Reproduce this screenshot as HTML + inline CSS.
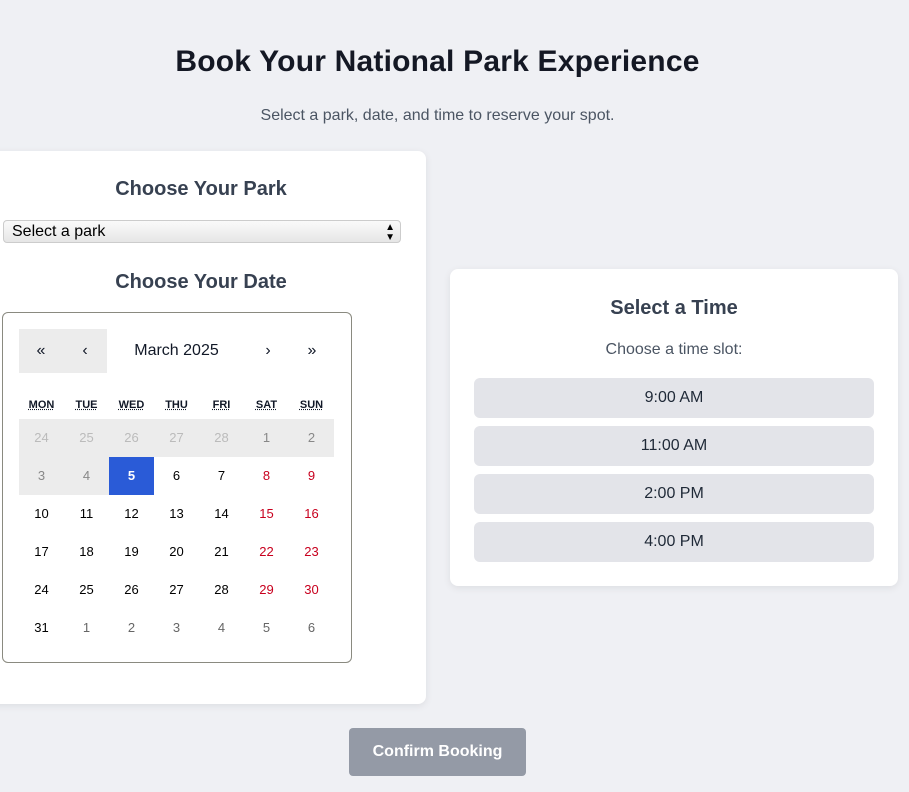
<!DOCTYPE html>
<html><head><style>
*{box-sizing:border-box;margin:0;padding:0}
body{width:909px;height:792px;background:#eff0f4;font-family:"Liberation Sans",sans-serif;position:relative;overflow:hidden;color:#111827}
.a{position:absolute}
h1{position:absolute;left:0;width:875px;top:45px;text-align:center;font-size:30px;font-weight:bold;color:#141824;letter-spacing:0.2px}
.sub{left:0;width:875px;top:107px;text-align:center;font-size:16px;color:#4b5563}
.card{background:#fff;border-radius:8px;box-shadow:0 2px 8px rgba(0,0,0,.08)}
.h2{font-size:20px;font-weight:bold;color:#374151;text-align:center}
.sel{left:3px;top:220px;width:398px;height:23px;border:1px solid #ccc;border-radius:4px;background:linear-gradient(#fafafa,#e6e6e6);font-size:16px;padding-left:8px;line-height:21px;color:#000}
.cal{left:2px;top:312px;width:350px;height:351px;border:1px solid #8a8a80;border-radius:6px;background:#fff}
.c{position:absolute;width:45px;height:38px;line-height:38px;text-align:center;font-size:13px;color:#000}
.w{position:absolute;width:45px;text-align:center;font-size:11px;font-weight:bold;top:86px;}
.w span{text-decoration:underline dotted}
.ts{left:474px;width:400px;height:40px;background:#e3e4e9;border-radius:6px;text-align:center;line-height:40px;font-size:16px;color:#1f2937}
</style></head><body>
<h1>Book Your National Park Experience</h1>
<div class="a sub">Select a park, date, and time to reserve your spot.</div>
<div class="a card" style="left:-20px;top:151px;width:446px;height:553px"></div>
<div class="a h2" style="left:0;width:402px;top:178px">Choose Your Park</div>
<div class="a sel">Select a park<span style="position:absolute;right:5px;top:0;font-size:10px;line-height:10px;top:2px">▲<br>▼</span></div>
<div class="a h2" style="left:0;width:402px;top:271px">Choose Your Date</div>
<div class="a cal">
<div class="a" style="left:16px;top:16px;width:88px;height:44px;background:#ececec"></div>
<div class="a" style="left:16px;top:16px;width:44px;line-height:44px;text-align:center;font-size:16px">«</div>
<div class="a" style="left:60px;top:16px;width:44px;line-height:44px;text-align:center;font-size:16px">‹</div>
<div class="a" style="left:104px;top:16px;width:139px;line-height:44px;text-align:center;font-size:16px">March 2025</div>
<div class="a" style="left:243px;top:16px;width:44px;line-height:44px;text-align:center;font-size:16px">›</div>
<div class="a" style="left:287px;top:16px;width:44px;line-height:44px;text-align:center;font-size:16px">»</div>
<div class="w" style="left:16px"><span>MON</span></div><div class="w" style="left:61px"><span>TUE</span></div><div class="w" style="left:106px"><span>WED</span></div><div class="w" style="left:151px"><span>THU</span></div><div class="w" style="left:196px"><span>FRI</span></div><div class="w" style="left:241px"><span>SAT</span></div><div class="w" style="left:286px"><span>SUN</span></div>
<div class="a" style="left:16px;top:106px;width:315px;height:38px;background:#ececec"></div>
<div class="a" style="left:16px;top:144px;width:90px;height:38px;background:#ececec"></div>
<div class="a" style="left:106px;top:144px;width:45px;height:38px;background:#2a5bd7"></div>
<div id="g"></div>
</div>
<script>
var rows=[[24,25,26,27,28,1,2],[3,4,5,6,7,8,9],[10,11,12,13,14,15,16],[17,18,19,20,21,22,23],[24,25,26,27,28,29,30],[31,1,2,3,4,5,6]],h='';
rows.forEach(function(r,i){r.forEach(function(d,j){var col='#000',fw='normal';
if(i==0){col=j<5?'#bbb':'#888'}else if(i==1&&j<2){col='#888'}else if(i==5&&j>0){col='#666'}else if(j>=5){col='#c8001e'}
if(i==1&&j==2){col='#fff';fw='bold'}
h+='<div class="c" style="left:'+(16+45*j)+'px;top:'+(106+38*i)+'px;color:'+col+';font-weight:'+fw+'">'+d+'</div>'})});
document.getElementById('g').outerHTML=h;
</script>
<div class="a card" style="left:450px;top:269px;width:448px;height:317px"></div>
<div class="a h2" style="left:450px;width:448px;top:297px">Select a Time</div>
<div class="a" style="left:450px;width:448px;top:341px;text-align:center;font-size:16px;color:#4b5563">Choose a time slot:</div>
<div class="a ts" style="top:378px">9:00 AM</div>
<div class="a ts" style="top:426px">11:00 AM</div>
<div class="a ts" style="top:474px">2:00 PM</div>
<div class="a ts" style="top:522px">4:00 PM</div>
<div class="a" style="left:349px;top:728px;width:177px;height:48px;background:#949aa6;border-radius:4px;color:#fff;font-weight:bold;font-size:16px;text-align:center;line-height:48px">Confirm Booking</div>
</body></html>
